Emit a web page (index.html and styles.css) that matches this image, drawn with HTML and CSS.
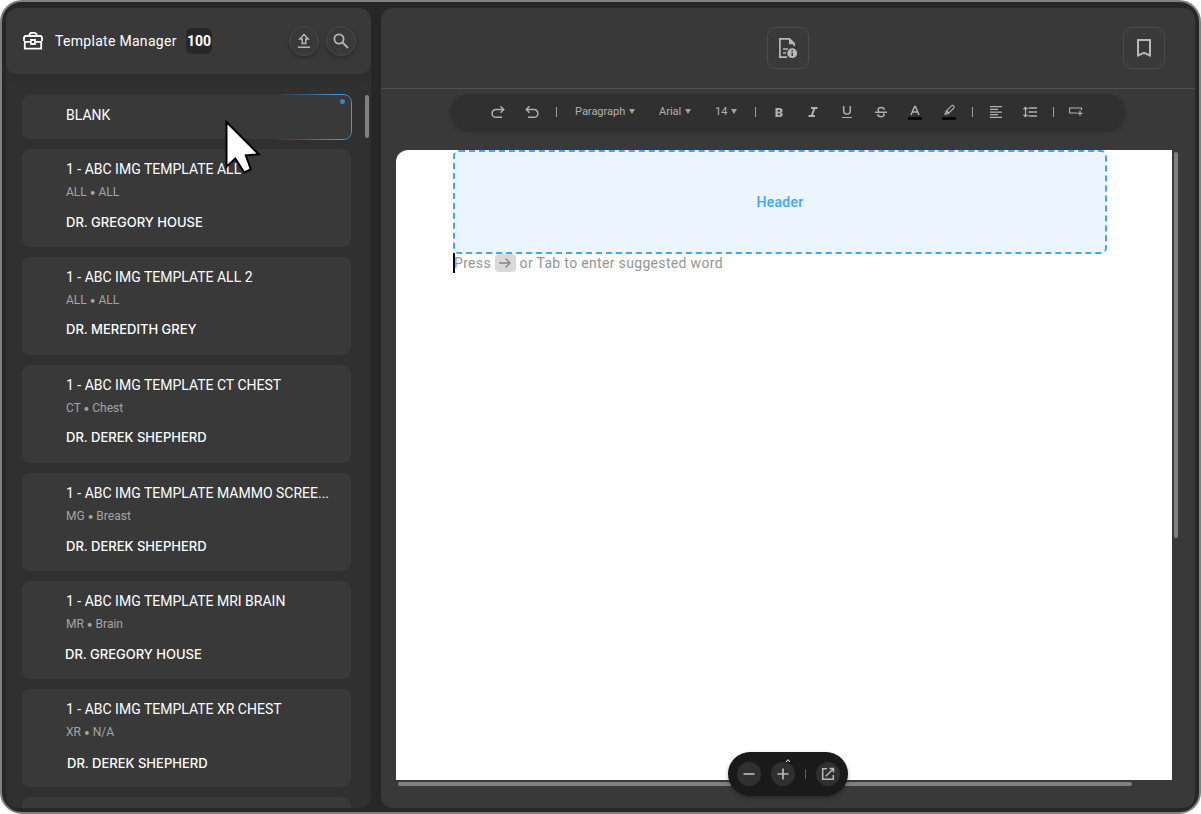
FILE: index.html
```html
<!DOCTYPE html>
<html lang="en">
<head>
    <meta charset="UTF-8">
    <meta name="viewport" content="width=device-width, initial-scale=1.0">
    <title>Template Manager</title>
    <link rel="stylesheet" href="styles.css">
</head>
<body>
    <div class="app">
      <aside class="sidebar">
        <div class="side-head">
          <svg class="case-icon" width="20" height="20" viewBox="0 0 20 20" fill="none" stroke="#fff" stroke-width="1.8">
            <path d="M6.5 5V3.2L8 1.9h4l1.500 1.300V5M1 10V6.300L2.200 5h15.600L19 6.300V10M1.800 10.500v7.200h16.400v-7.200M1 10.800h6.500M12.500 10.800H19"/>
            <path d="M8 9h4v4H8z"/>
          </svg>
          <h1>Template Manager</h1>
          <span class="count">100</span>
          <button class="round-btn upload">
            <svg width="16" height="16" viewBox="0 0 16 16" fill="none" stroke="#b5b5b5" stroke-width="1.5"><path d="M8 1.600L3.800 6h2.400v4.500h3.600V6h2.400zM2 14.300h12"/></svg>
          </button>
          <button class="round-btn">
            <svg width="16" height="16" viewBox="0 0 16 16" fill="none" stroke="#b5b5b5" stroke-width="1.800"><circle cx="6" cy="6" r="4.600"/><path d="M9.500 9.500l5.500 5.500"/></svg>
          </button>
        </div>
        <div class="list">
          <div class="card blank">
            <h2>BLANK</h2>
            <span class="dot"></span>
          </div>
          <div class="card">
            <h2>1 - ABC IMG TEMPLATE ALL</h2>
            <p class="meta">ALL <b>•</b> ALL</p>
            <p class="doctor low">DR. GREGORY HOUSE</p>
          </div>
          <div class="card">
            <h2>1 - ABC IMG TEMPLATE ALL 2</h2>
            <p class="meta">ALL <b>•</b> ALL</p>
            <p class="doctor">DR. MEREDITH GREY</p>
          </div>
          <div class="card">
            <h2>1 - ABC IMG TEMPLATE CT CHEST</h2>
            <p class="meta">CT <b>•</b> Chest</p>
            <p class="doctor">DR. DEREK SHEPHERD</p>
          </div>
          <div class="card">
            <h2>1 - ABC IMG TEMPLATE MAMMO SCREE...</h2>
            <p class="meta">MG <b>•</b> Breast</p>
            <p class="doctor low">DR. DEREK SHEPHERD</p>
          </div>
          <div class="card">
            <h2>1 - ABC IMG TEMPLATE MRI BRAIN</h2>
            <p class="meta">MR <b>•</b> Brain</p>
            <p class="doctor low out">DR. GREGORY HOUSE</p>
          </div>
          <div class="card">
            <h2>1 - ABC IMG TEMPLATE XR CHEST</h2>
            <p class="meta">XR <b>•</b> N/A</p>
            <p class="doctor lower">DR. DEREK SHEPHERD</p>
          </div>
          <div class="card"></div>
        </div>
        <span class="side-scroll"></span>
      </aside>

      <main class="editor">
        <div class="top">
          <span></span>
          <button class="square-btn">
            <svg width="20" height="22" viewBox="0 0 20 22" fill="none" stroke="#b8b8b8" stroke-width="1.700">
              <path d="M9 20.200H1.900V1.900h9.600l4.700 4.800V9"/>
              <path d="M11 1.500v5.700h5.700z" fill="#b8b8b8" stroke="none"/>
              <path d="M5 12h5M5 16h3"/>
              <circle cx="14.200" cy="16.200" r="4.900" fill="#b8b8b8" stroke="none"/>
              <path d="M14.200 15.500v3.500M14.200 13v1.400" stroke="#393939" stroke-width="1.400"/>
            </svg>
          </button>
          <button class="square-btn">
            <svg width="16" height="20" viewBox="0 0 16 20" fill="none" stroke="#b8b8b8" stroke-width="2"><path d="M2 2h12v15.500l-6-2.700-6 2.700z"/></svg>
          </button>
        </div>

        <div class="toolbar">
          <span class="tool"><svg width="14" height="14" viewBox="0 0 14 14"><path d="M12.500 4.500H5a3.900 3.900 0 0 0 0 7.800h6M9.500 1.300l3.200 3.200-3.200 3.200"/></svg></span>
          <span class="tool"><svg width="14" height="14" viewBox="0 0 14 14"><path d="M1.500 4.500H9a3.900 3.900 0 0 1 0 7.800H3M4.500 1.300L1.300 4.500l3.200 3.200"/></svg></span>
          <span class="sep wide"></span>
          <span class="drop para">Paragraph<i></i></span>
          <span class="drop font">Arial<i></i></span>
          <span class="drop size">14<i></i></span>
          <span class="sep"></span>
          <span class="tool letter">B</span>
          <span class="tool"><svg width="12" height="12" viewBox="0 0 12 12"><path d="M4 2h6.500M1.500 10H8M7.600 2L4.600 10" stroke-width="2"/></svg></span>
          <span class="tool"><svg width="12" height="14" viewBox="0 0 12 14"><path d="M2.700 1v4.800a3.300 3.300 0 0 0 6.600 0V1"/><path d="M1 12.500h10" stroke-width="1.200"/></svg></span>
          <span class="tool"><svg width="12" height="12" viewBox="0 0 12 12"><path d="M9.200 3.800C9.200 2.300 8 1.500 6.100 1.500S3 2.400 3 3.700c0 .8.400 1.300 1.200 1.700M8.300 7.300c1.800 1.500.6 3.400-2.200 3.400-2 0-3.300-.9-3.300-2.500M0 6.300h12"/></svg></span>
          <span class="tool"><svg width="14" height="16" viewBox="0 0 14 16"><path d="M3 11L6.600 2.500h.8L11 11M4.500 8h5"/><path class="ink" d="M0 14.500h14"/></svg></span>
          <span class="tool marker"><svg width="14" height="16" viewBox="0 0 14 16"><path d="M4.200 7.200l5.500-5.500q1-.7 2 .2t.2 2L6.500 9.500zM4.200 7.200L3 10.300 6.500 9.500M4.500 6.800L7 9.200" stroke-width="1.200"/><path class="ink" d="M0 14.500h14"/></svg></span>
          <span class="sep"></span>
          <span class="tool"><svg width="12" height="12" viewBox="0 0 12 12"><path d="M0 .7h12M0 3.400h8M0 6.100h12M0 8.700h8M0 11.400h12" stroke-width="1.200"/></svg></span>
          <span class="tool"><svg width="14" height="12" viewBox="0 0 14 12"><path d="M5.500 2H14M5.500 6H14M5.500 10H14M2.500 1.500v9M.5 3.300l2-2 2 2M.5 8.700l2 2 2-2" stroke-width="1.300"/></svg></span>
          <span class="sep thin"></span>
          <span class="tool"><svg width="14" height="12" viewBox="0 0 14 12"><path d="M12.500 4V2h-12v5H8M11 4.800v5M8.500 7.300h5" stroke-width="1.200"/></svg></span>
        </div>

        <div class="page">
          <div class="page-header">Header</div>
          <p class="hint"><span class="caret"></span>Press <kbd><svg width="14" height="12" viewBox="0 0 14 12" fill="none" stroke="#858585" stroke-width="1.300"><path d="M1 6h11M7.500 1.500L12 6l-4.500 4.500"/></svg></kbd> or Tab to enter suggested word</p>
        </div>
        <span class="page-scroll-y"></span>
        <span class="page-scroll-x"></span>

        <div class="zoom-bar">
          <button><svg width="12" height="12" viewBox="0 0 12 12"><path d="M.5 6h11"/></svg></button>
          <button><svg width="12" height="12" viewBox="0 0 12 12"><path d="M.5 6h11M6 .5v11"/></svg></button>
          <span class="zoom-sep"></span>
          <button><svg width="14" height="14" viewBox="0 0 14 14"><path d="M6 1.700H1.700v10.600h10.600V8M8.500 1.500h4v4M12.300 1.700L4.800 9.200" stroke-width="1.500"/></svg></button>
          <svg class="chevron" width="6" height="5" viewBox="0 0 6 5"><path d="M1 4l2-2.300L5 4"/></svg>
        </div>
      </main>
    </div>

    <svg class="cursor" width="40" height="60" viewBox="0 0 40 60">
      <path d="M2.500 4v44.800l8.800-8.300 9 14 6.500-3.300-5-13.700 13-1.200z" fill="#fff" stroke="#000" stroke-width="2"/>
    </svg>
</body>
</html>
```
FILE: styles.css
```css
* {
    box-sizing: border-box;
}
body {
    margin: 0;
    background: #fff;
    font-family: Roboto, sans-serif;
    color: #fff;
}
h1, h2, p {
    margin: 0;
    font-weight: 400;
}
button {
    display: flex;
    align-items: center;
    justify-content: center;
    padding: 0;
    border: none;
}
.app {
    display: flex;
    gap: 10px;
    width: 1201px;
    height: 814px;
    padding: 6px 4px 4px;
    border: 2px solid #808080;
    border-radius: 22px;
    background: #272727;
    overflow: hidden;
}

/* template list */
.sidebar {
    position: relative;
    width: 365px;
    height: 800px;
    background: #303030;
    border-radius: 12px;
    overflow: hidden;
}
.side-head {
    display: flex;
    align-items: center;
    height: 66px;
    padding: 0 15px 0 17px;
    background: #393939;
    border-radius: 10px;
    box-shadow: 0 3px 12px rgba(0, 0, 0, 0.12);
}
.side-head h1 {
    width: 121px;
    margin-left: 12px;
    font-size: 14px;
    letter-spacing: 0.3px;
    white-space: nowrap;
}
.count {
    width: 26px;
    height: 26px;
    margin-left: 10px;
    border-radius: 6px;
    background: #272727;
    font-size: 14px;
    font-weight: 700;
    line-height: 26px;
    text-align: center;
}
.round-btn {
    width: 30px;
    height: 30px;
    border: 1px solid #4b4b4b;
    border-radius: 50%;
    background: #393939;
    box-shadow: 0 2px 4px rgba(0, 0, 0, 0.25);
}
.upload {
    margin-left: auto;
    margin-right: 7px;
}
.list {
    display: flex;
    flex-direction: column;
    gap: 10px;
    padding: 21px 20px 0 16px;
}
.card {
    position: relative;
    flex: none;
    height: 98px;
    padding: 12px 20px 0 44px;
    border-radius: 8px;
    background: #393939;
}
.card.blank {
    height: 44px;
}
/* blue outline that fades out to the left */
.card.blank::after {
    content: "";
    position: absolute;
    inset: -1px;
    border: 1px solid #3f96e0;
    border-radius: 8px;
    -webkit-mask-image: linear-gradient(to right, transparent 76%, #000 96%);
    mask-image: linear-gradient(to right, transparent 76%, #000 96%);
}
.card h2 {
    font-size: 14px;
    line-height: 16px;
    white-space: nowrap;
}
.meta {
    margin-top: 8px;
    font-size: 12px;
    line-height: 14px;
    color: #a5a5a5;
}
.meta b {
    font-family: Inter, sans-serif;
    font-weight: 400;
    line-height: 1;
    margin: 0 -0.5px;
}
.doctor {
    margin-top: 14px;
    font-family: Inter, sans-serif;
    font-size: 13px;
    font-weight: 500;
    line-height: 16px;
}
.doctor.low {
    margin-top: 15px;
}
.doctor.lower {
    margin: 16px 0 0 1px;
}
.doctor.out {
    margin-left: -1px;
}
.dot {
    position: absolute;
    top: 4px;
    right: 6px;
    width: 5px;
    height: 5px;
    border-radius: 50%;
    background: #3b82c4;
}
.side-scroll {
    position: absolute;
    top: 87px;
    right: 2px;
    width: 4px;
    height: 43px;
    border-radius: 2px;
    background: #808080;
}

/* editor */
.editor {
    position: relative;
    width: 814px;
    height: 800px;
    background: #393939;
    border-radius: 12px;
    overflow: hidden;
}
.top {
    display: grid;
    grid-template-columns: 1fr 42px 1fr;
    align-items: center;
    height: 81px;
    padding: 0 30px;
    border-bottom: 1px solid #505050;
}
.top .square-btn:last-child {
    justify-self: end;
}
.square-btn {
    width: 42px;
    height: 42px;
    border: 1px solid #4b4b4b;
    border-radius: 9px;
    background: none;
}
.toolbar {
    display: flex;
    align-items: center;
    width: 674px;
    height: 36px;
    margin: 5px 0 0 70px;
    padding-left: 30px;
    border-radius: 18px;
    background: #303030;
    box-shadow: 0 2px 4px rgba(0, 0, 0, 0.2);
}
.tool {
    display: flex;
    align-items: center;
    justify-content: center;
    width: 34px;
}
.tool svg {
    fill: none;
    stroke: #b0b0b0;
    stroke-width: 1.5;
}
.tool .ink {
    stroke: #000;
    stroke-width: 2.5;
}
.tool.marker {
    width: 33px;
}
.letter {
    font-size: 13px;
    font-weight: 900;
    color: #b0b0b0;
}
.sep {
    width: 1px;
    height: 10px;
    margin: 0 6px 0 7px;
    background: #a0a0a0;
}
.sep.wide {
    margin: 0 8px 0 7px;
}
.sep.thin {
    margin: 0 5px 0 6px;
}
.drop {
    display: flex;
    align-items: center;
    gap: 4px;
    padding: 0 0 2px 10px;
    font-size: 11px;
    color: #b0b0b0;
}
.drop i {
    border: 3px solid transparent;
    border-top: 5px solid #a0a0a0;
    border-bottom: none;
}
.para {
    width: 84px;
}
.font {
    width: 56px;
}
.size {
    width: 43px;
}
.page {
    width: 776px;
    height: 630px;
    margin: 20px 0 0 15px;
    padding-left: 57px;
    border-top-left-radius: 12px;
    background: #fff;
}
.page-header {
    width: 654px;
    height: 104px;
    border: 2px dashed #42a5f5;
    border-radius: 6px;
    background: #ebf5ff;
    font-size: 14px;
    font-weight: 500;
    letter-spacing: 0.3px;
    line-height: 100px;
    text-align: center;
    color: #42a5f5;
}
.hint {
    display: flex;
    align-items: center;
    height: 20px;
    margin-top: -1px;
    font-size: 14px;
    letter-spacing: 0.33px;
    white-space: pre;
    color: #959595;
}
.caret {
    width: 2px;
    height: 20px;
    margin-right: -1px;
    background: #000;
}
.hint kbd {
    display: flex;
    align-items: center;
    justify-content: center;
    width: 21px;
    height: 18px;
    border-radius: 4px;
    background: #d9d9d9;
}
.page-scroll-y {
    position: absolute;
    top: 144px;
    right: 17px;
    width: 4px;
    height: 386px;
    border-radius: 2px;
    background: #808080;
}
.page-scroll-x {
    position: absolute;
    left: 17px;
    bottom: 22px;
    width: 734px;
    height: 4px;
    border-radius: 2px;
    background: #808080;
}
.zoom-bar {
    position: absolute;
    top: 744px;
    left: 347px;
    display: flex;
    align-items: center;
    gap: 10px;
    width: 120px;
    height: 44px;
    padding-left: 9px;
    border-radius: 22px;
    background: #1a1a1a;
    box-shadow: 0 2px 4px rgba(0, 0, 0, 0.3);
}
.zoom-bar button {
    width: 24px;
    height: 24px;
    border-radius: 50%;
    background: #303030;
}
.zoom-bar svg {
    fill: none;
    stroke: #b8b8b8;
    stroke-width: 1.7;
}
.zoom-sep {
    width: 1px;
    height: 10px;
    background: #606060;
}
.zoom-bar .chevron {
    position: absolute;
    top: 6px;
    left: 57px;
    stroke: #fff;
    stroke-width: 1;
}
.cursor {
    position: absolute;
    top: 118px;
    left: 224px;
}
```
